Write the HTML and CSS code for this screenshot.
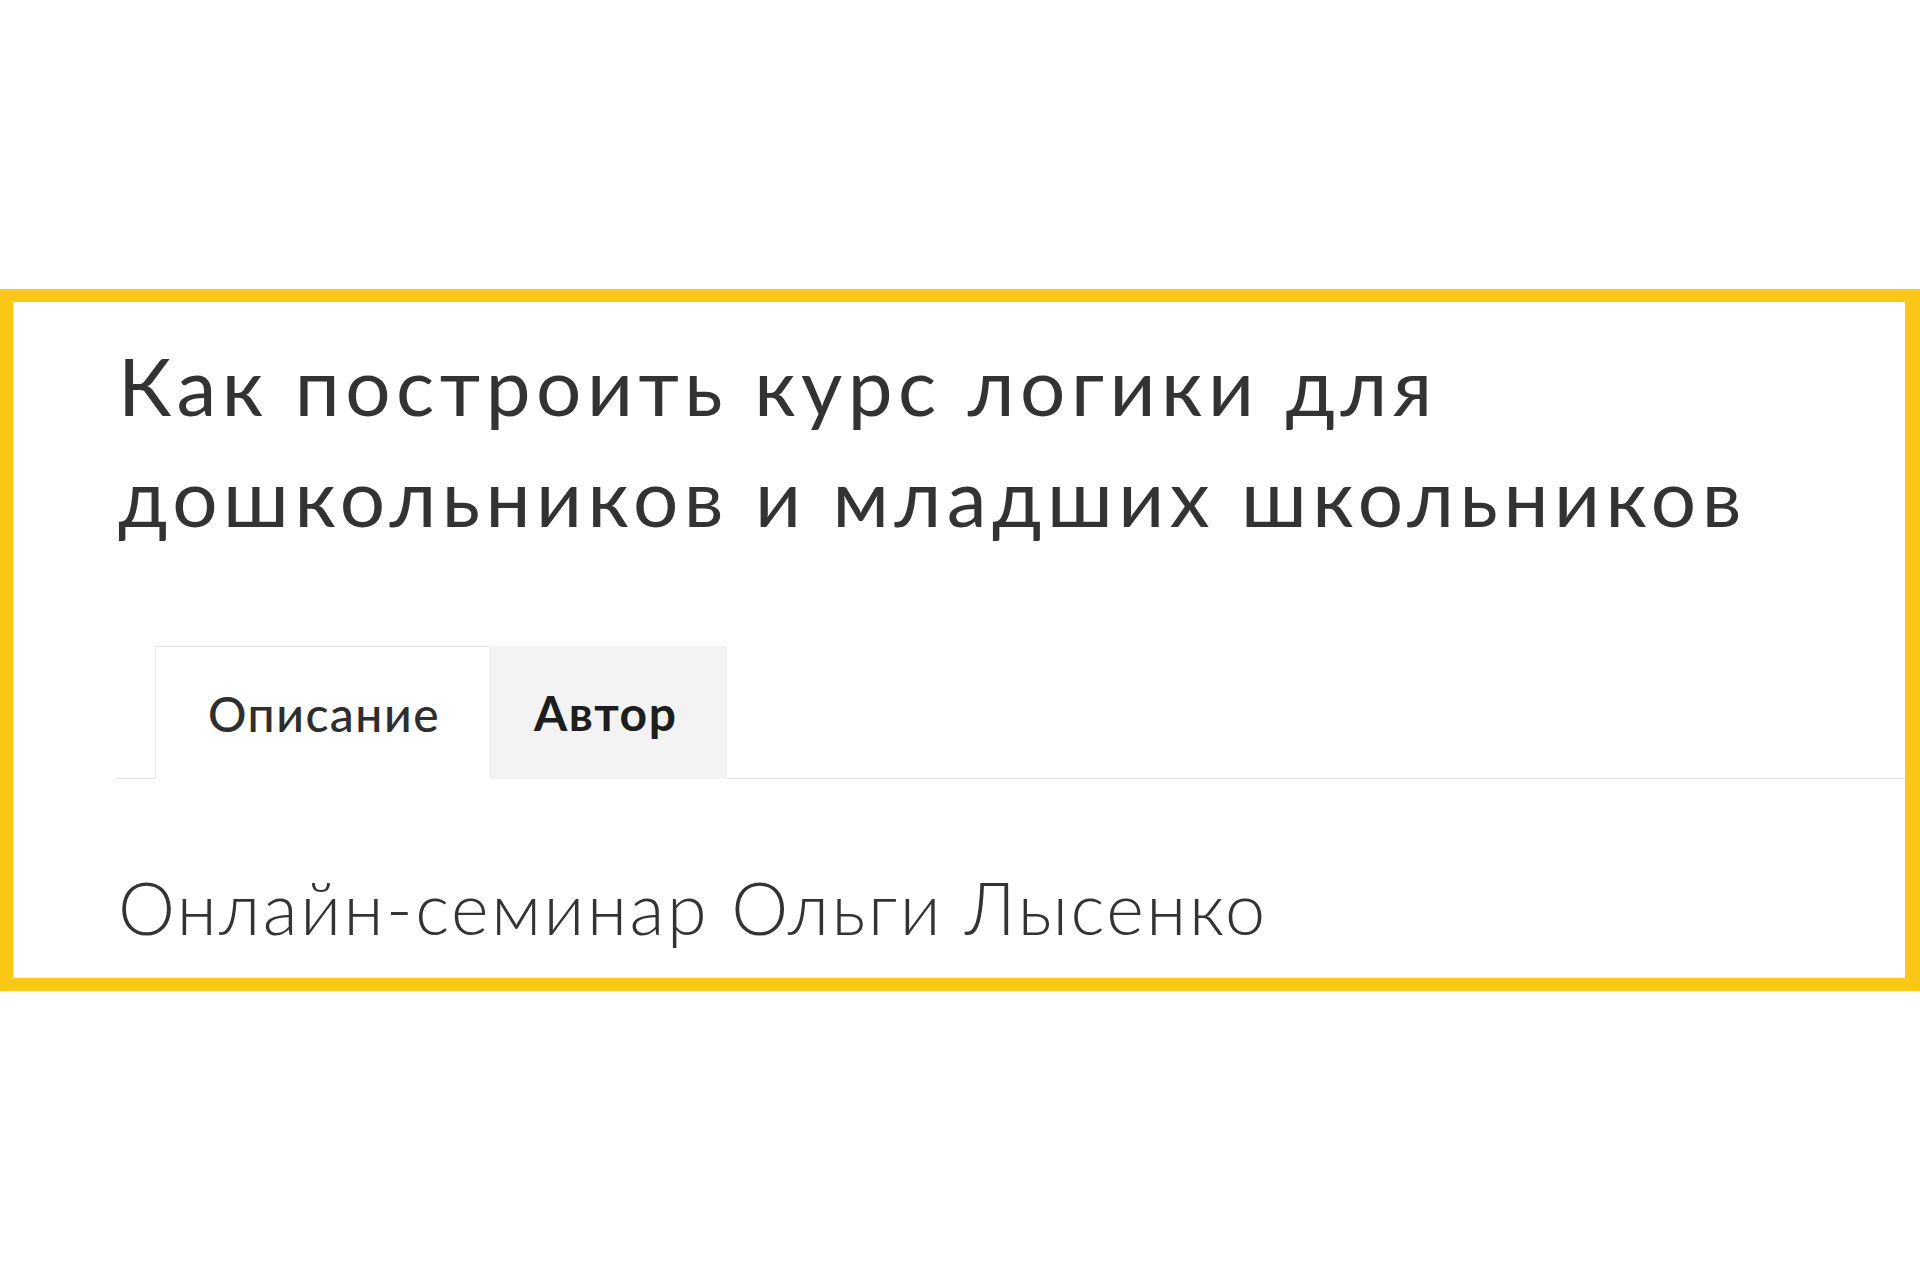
FILE: index.html
```html
<!DOCTYPE html>
<html lang="ru">
<head>
    <meta charset="UTF-8">
    <meta name="viewport" content="width=device-width, initial-scale=1.0">
    <title>Как построить курс логики</title>
    <link rel="stylesheet" href="styles.css">
</head>
<body>
    <!-- Карточка семинара -->
    <div class="frame">
        <h1 class="title">Как построить курс логики для<br>дошкольников и младших школьников</h1>

        <ul class="tabs">
            <li class="tab active">Описание</li>
            <li class="tab">Автор</li>
        </ul>

        <h2 class="subtitle">Онлайн-семинар Ольги Лысенко</h2>
    </div>
</body>
</html>
```

FILE: styles.css
```css
body {
    margin: 0;
    background: #ffffff;
    font-family: 'Lato', 'Liberation Sans', sans-serif;
    color: #333333;
}

/* Жёлтая рамка */
.frame {
    margin-top: 289px;
    border: 13px solid #fcc817;
    border-right-width: 15px;
    background: #ffffff;
    padding: 28px 0 28px 105px;
}

.title {
    margin: 0;
    font-size: 80px;
    font-weight: 400;
    line-height: 111px;
    letter-spacing: 5.5px;
    color: #333333;
}

/* Вкладки */
.tabs {
    list-style: none;
    display: flex;
    margin: 94px 0 0 -2px;
    padding: 0 0 0 39px;
    border-bottom: 1px solid #e4e4e4;
}

.tab {
    height: 133px;
    box-sizing: border-box;
    padding: 0 50px 0 43px;
    display: flex;
    align-items: center;
    font-size: 48px;
    font-weight: 700;
    letter-spacing: 1.5px;
    color: #1e1e1e;
    background: #f3f3f3;
    margin-bottom: -1px;
}

.tab.active {
    padding-left: 52px;
    background: #ffffff;
    color: #2e2e2e;
    border: 1px solid #e8e8e8;
    border-bottom: none;
    font-weight: 500;
}

.subtitle {
    margin: 85px 0 0;
    font-size: 72px;
    font-weight: 300;
    line-height: 1.2;
    letter-spacing: 2.55px;
    color: #333333;
}
```
